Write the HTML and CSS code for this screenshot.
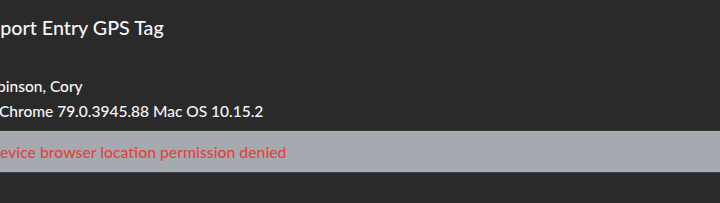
FILE: index.html
```html
<!DOCTYPE html>
<html lang="en">
<head>
    <meta charset="UTF-8">
    <title>Report Entry GPS Tag</title>
    <link rel="stylesheet" href="styles.css">
</head>
<body>
<div class="panel">
    <h2 class="title">Report Entry GPS Tag</h2>
    <div class="info">
        <p class="user">Robinson, Cory</p>
        <p class="agent"><span class="agent-ico"></span>Chrome 79.0.3945.88 Mac OS 10.15.2</p>
    </div>
    <div class="alert">
        <p class="alert-text">Device browser location permission denied</p>
    </div>
</div>
</body>
</html>
```

FILE: styles.css
```css
/* reset */
body,h2,p{margin:0;padding:0}
body{
    background: #2a2a2b;
    font: 500 15.5px/24px Lato, "Open Sans", sans-serif;
    color: #f6f6f6;
    overflow: hidden;
}
.panel {
    margin-left: -22px;
    padding-top: 14px;
}
.title {
    font-size: 19.7px;
    font-weight: 500;
    line-height: 28px;
}
.info {
    margin-top: 32px;
    padding-left: 1px;
}
.agent-ico {
    display: inline-block;
    width: 20px;
}
.agent {
    margin-top: 1px;
}
.alert {
    margin-top: 8px;
    margin-left: 10px;
    background: #a5aab1;
    border-top: 1px solid #b4b8bd;
    border-bottom: 1px solid #3a3d45;
    padding: 8px 0 8px;
}
.alert-text {
    font-size: 15.8px;
    color: #e1433d;
}
```
